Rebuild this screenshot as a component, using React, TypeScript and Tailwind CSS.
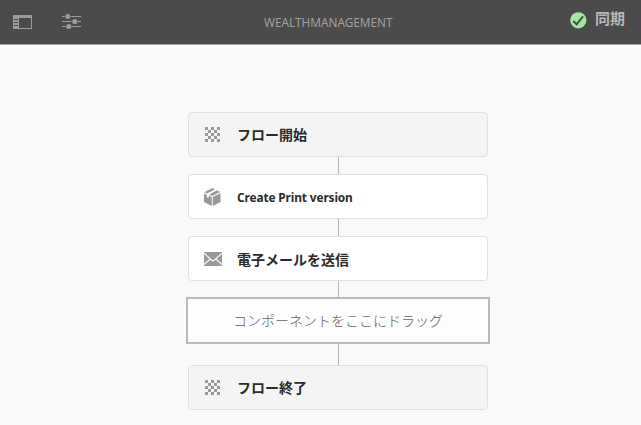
import type { ReactNode } from "react";

const cells = [0, 1, 2, 3, 4].flatMap((r) =>
  [0, 1, 2, 3, 4].filter((c) => (r + c) % 2 === 0).map((c) => [c, r])
);

function CheckerIcon() {
  return (
    <svg width="15" height="15" viewBox="0 0 15 15" fill="#999" shapeRendering="crispEdges">
      {cells.map(([c, r]) => (
        <rect key={`${c}-${r}`} x={c * 3} y={r * 3} width="3" height="3" />
      ))}
    </svg>
  );
}

function BoxIcon() {
  return (
    <svg width="17" height="18" viewBox="0 0 17 18" fill="#999">
      <path d="M0.4 4.2 8.3 0 11 1.2 3 5.4Z" />
      <path d="M5.2 6.4 13 2.2 16.2 3.9 8.3 8.1Z" />
      <path d="M0 5.4 2.8 6.7V9.2L4.6 10V7.5L7.8 9V18L0 14Z" />
      <path d="M8.8 9 16.5 5.2V14L8.8 18Z" />
    </svg>
  );
}

function MailIcon() {
  return (
    <svg width="18" height="14" viewBox="0 0 18 14" fill="none">
      <path d="M0 0h18v14H0z" fill="#999" />
      <path d="M0 1.2 7.7 8.2Q9 9.2 10.3 8.2L18 1.2M0 12.6 6.2 7M18 12.6 11.8 7" stroke="#fff" strokeWidth="1.1" />
    </svg>
  );
}

function RailIcon() {
  return (
    <svg width="19" height="14" viewBox="0 0 19 14" fill="#9b9b9b" shapeRendering="crispEdges">
      <path fillRule="evenodd" d="M0 0h19v14H0zM6 3v10h12V3zM1 4v1h4V4zM1 7v1h4V7zM1 10v1h4v-1z" />
    </svg>
  );
}

function SlidersIcon() {
  return (
    <svg width="19" height="16" viewBox="0 0 19 16" fill="#9b9b9b">
      <path d="M0 2h2.5v1H0zM9 2h10v1H9zM0 7h9.5v1H0zM16 7h3v1h-3zM0 12h3.5v1H0zM10 12h9v1h-9z" />
      <circle cx="5.8" cy="2.5" r="2.5" />
      <circle cx="12.8" cy="7.5" r="2.6" />
      <circle cx="6.8" cy="12.5" r="2.6" />
    </svg>
  );
}

function CheckIcon() {
  return (
    <svg width="17" height="17" viewBox="0 0 17 17" fill="none">
      <circle cx="8.3" cy="8.3" r="8.1" fill="#a2e8a0" />
      <path d="M3.2 9 6.7 12.3 13 4.3" stroke="#4b4b4b" strokeWidth="2" />
    </svg>
  );
}

function Step({ icon, muted, children }: { icon: ReactNode; muted?: boolean; children: ReactNode }) {
  return (
    <div
      className={`flex h-[45px] w-[300px] items-center rounded-[4px] border border-[#e0e0e0] pl-[15px] ${
        muted ? "bg-[#f4f4f4]" : "bg-white"
      }`}
    >
      <span className="flex w-[18px]">{icon}</span>
      <span className={`ml-[15px] whitespace-nowrap ${muted ? "pb-px" : ""}`}>{children}</span>
    </div>
  );
}

function Connector({ size }: { size: string }) {
  return <div className={`ml-px w-px bg-[#b5b5b5] ${size}`} />;
}

const jpBold = "block text-[14px] leading-5 font-bold text-[#2b2b2b] font-['Noto_Sans_CJK_JP',sans-serif]";

export default function App() {
  return (
    <div className="flex h-[425px] w-[641px] flex-col overflow-hidden bg-[#f9f9f9]">
      <header className="flex h-[45px] shrink-0 items-center border-b border-[#a5a5a5] bg-[#4b4b4b]">
        <div className="flex w-[264px] items-center pl-[13px]">
          <RailIcon />
          <span className="ml-[30px]"><SlidersIcon /></span>
        </div>
        <h1 className="w-[142px] origin-left scale-x-[0.906] text-[13px] leading-5 font-normal whitespace-nowrap text-[#a0a0a0] font-['Noto_Sans',sans-serif]">
          WEALTHMANAGEMENT
        </h1>
        <div className="flex flex-1 items-center justify-end pr-[16px] pb-[5px]">
          <span className="mt-px"><CheckIcon /></span>
          <span className="ml-[8px] pb-[4px] text-[15px] leading-5 font-bold text-[#b8b8b8] font-['Noto_Sans_CJK_JP',sans-serif]">同期</span>
        </div>
      </header>
      <main className="flex w-[676px] flex-col items-center pt-[67px]">
        <Step icon={<span className="pl-px"><CheckerIcon /></span>} muted><span className={jpBold}>フロー開始</span></Step>
        <Connector size="h-[17px]" />
        <Step icon={<BoxIcon />}>
          <span className="block origin-left scale-x-[0.915] pt-px text-[13px] leading-5 font-bold tracking-[-0.15px] text-[#2b2b2b] font-['Noto_Sans',sans-serif]">Create Print version</span>
        </Step>
        <Connector size="h-[17px]" />
        <Step icon={<MailIcon />}><span className={jpBold}>電子メールを送信</span></Step>
        <Connector size="h-[16px]" />
        <div className="flex h-[47px] w-[304px] items-center justify-center border-2 border-[#bababa] bg-[#fdfdfd] text-[14px] font-light text-[#606060] font-['Noto_Sans_CJK_JP',sans-serif]">
          コンポーネントをここにドラッグ
        </div>
        <Connector size="h-[21px]" />
        <Step icon={<span className="pl-px"><CheckerIcon /></span>} muted><span className={jpBold}>フロー終了</span></Step>
      </main>
    </div>
  );
}
